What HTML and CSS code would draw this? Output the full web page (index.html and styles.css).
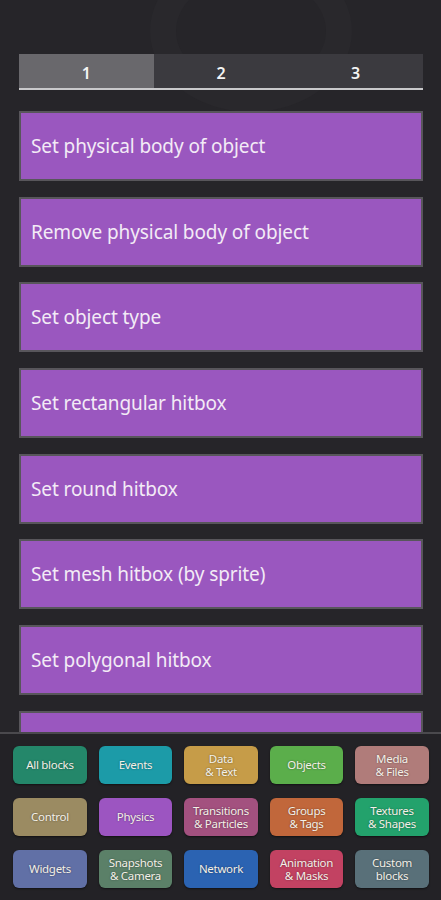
FILE: index.html
```html
<!DOCTYPE html>
<html lang="en">

<head>
    <meta charset="UTF-8">
    <meta name="viewport" content="width=device-width, initial-scale=1.0">
    <title>Physics blocks</title>
    <link rel="stylesheet" href="styles.css">
</head>

<body>
    <div class="app">
        <div class="backdrop"></div>

        <nav class="tabs">
            <div class="tab active">1</div>
            <div class="tab">2</div>
            <div class="tab">3</div>
        </nav>

        <main class="list">
            <div class="item">Set physical body of object</div>
            <div class="item">Remove physical body of object</div>
            <div class="item">Set object type</div>
            <div class="item">Set rectangular hitbox</div>
            <div class="item">Set round hitbox</div>
            <div class="item">Set mesh hitbox (by sprite)</div>
            <div class="item">Set polygonal hitbox</div>
            <div class="item"></div>
        </main>

        <footer class="panel">
            <div class="cat c-all">All blocks</div>
            <div class="cat c-events">Events</div>
            <div class="cat c-data">Data<br>&amp; Text</div>
            <div class="cat c-objects">Objects</div>
            <div class="cat c-media">Media<br>&amp; Files</div>
            <div class="cat c-control">Control</div>
            <div class="cat c-physics">Physics</div>
            <div class="cat c-trans">Transitions<br>&amp; Particles</div>
            <div class="cat c-groups">Groups<br>&amp; Tags</div>
            <div class="cat c-textures">Textures<br>&amp; Shapes</div>
            <div class="cat c-widgets">Widgets</div>
            <div class="cat c-snap">Snapshots<br>&amp; Camera</div>
            <div class="cat c-network">Network</div>
            <div class="cat c-anim">Animation<br>&amp; Masks</div>
            <div class="cat c-custom">Custom<br>blocks</div>
        </footer>
    </div>
</body>

</html>
```

FILE: styles.css
```css
body {
    margin: 0;
    padding: 0;
    background: #262529;
    font-family: "Noto Sans", "Open Sans", sans-serif;
    color: #f2eaf5;
}

.app {
    position: relative;
    height: 900px;
    display: flex;
    flex-direction: column;
    overflow: hidden;
}

/* faint shapes in the background */
.backdrop {
    position: absolute;
    left: 150px;
    top: -50px;
    width: 150px;
    height: 110px;
    border-radius: 50%;
    border: 26px solid #29282c;
    z-index: 0;
}

.tabs {
    position: relative;
    z-index: 1;
    display: flex;
    height: 34px;
    margin: 54px 18px 0 19px;
    border-bottom: 2px solid #c9c9cb;
}

.tab {
    flex: 1;
    display: flex;
    align-items: center;
    justify-content: center;
    background: #3b3a3f;
    color: #f4f4f4;
    font-size: 16px;
    font-weight: 600;
    padding-top: 3px;
}

.tab.active {
    background: #69686c;
}

.list {
    position: relative;
    z-index: 1;
    flex: 1;
    min-height: 0;
    overflow: hidden;
    display: flex;
    flex-direction: column;
    gap: 15.7px;
    padding: 21px 18px 0 19px;
}

.item {
    flex: none;
    height: 66px;
    display: flex;
    align-items: center;
    padding-left: 10px;
    background: #9a57bf;
    border: 2px solid #58565b;
    font-size: 19px;
    letter-spacing: -0.1px;
    color: #f3ebf6;
}

.panel {
    position: relative;
    z-index: 1;
    height: 154px;
    background: #232226;
    border-top: 2px solid #4a494d;
    display: grid;
    grid-template-columns: repeat(5, 1fr);
    grid-auto-rows: 38px;
    column-gap: 11.6px;
    row-gap: 14px;
    padding: 12px 12px 0 13px;
}

.cat {
    display: flex;
    align-items: center;
    justify-content: center;
    text-align: center;
    border-radius: 6px;
    font-size: 11.5px;
    line-height: 13.5px;
    letter-spacing: -0.3px;
    color: #f4f0e8;
    text-shadow: 0 0 2px rgba(0, 0, 0, 0.45);
    box-shadow: 0 1px 2px rgba(0, 0, 0, 0.5);
}

.c-all { background: #24876a; }
.c-events { background: #1c9ba8; }
.c-data { background: #c69c48; }
.c-objects { background: #5bae4b; }
.c-media { background: #b07c7a; }
.c-control { background: #9b8b62; }
.c-physics { background: #9c55c1; }
.c-trans { background: #a3517f; }
.c-groups { background: #c1673b; }
.c-textures { background: #23a26c; }
.c-widgets { background: #6170a6; }
.c-snap { background: #5b8068; }
.c-network { background: #2b63b2; }
.c-anim { background: #c24262; }
.c-custom { background: #597079; }
```
